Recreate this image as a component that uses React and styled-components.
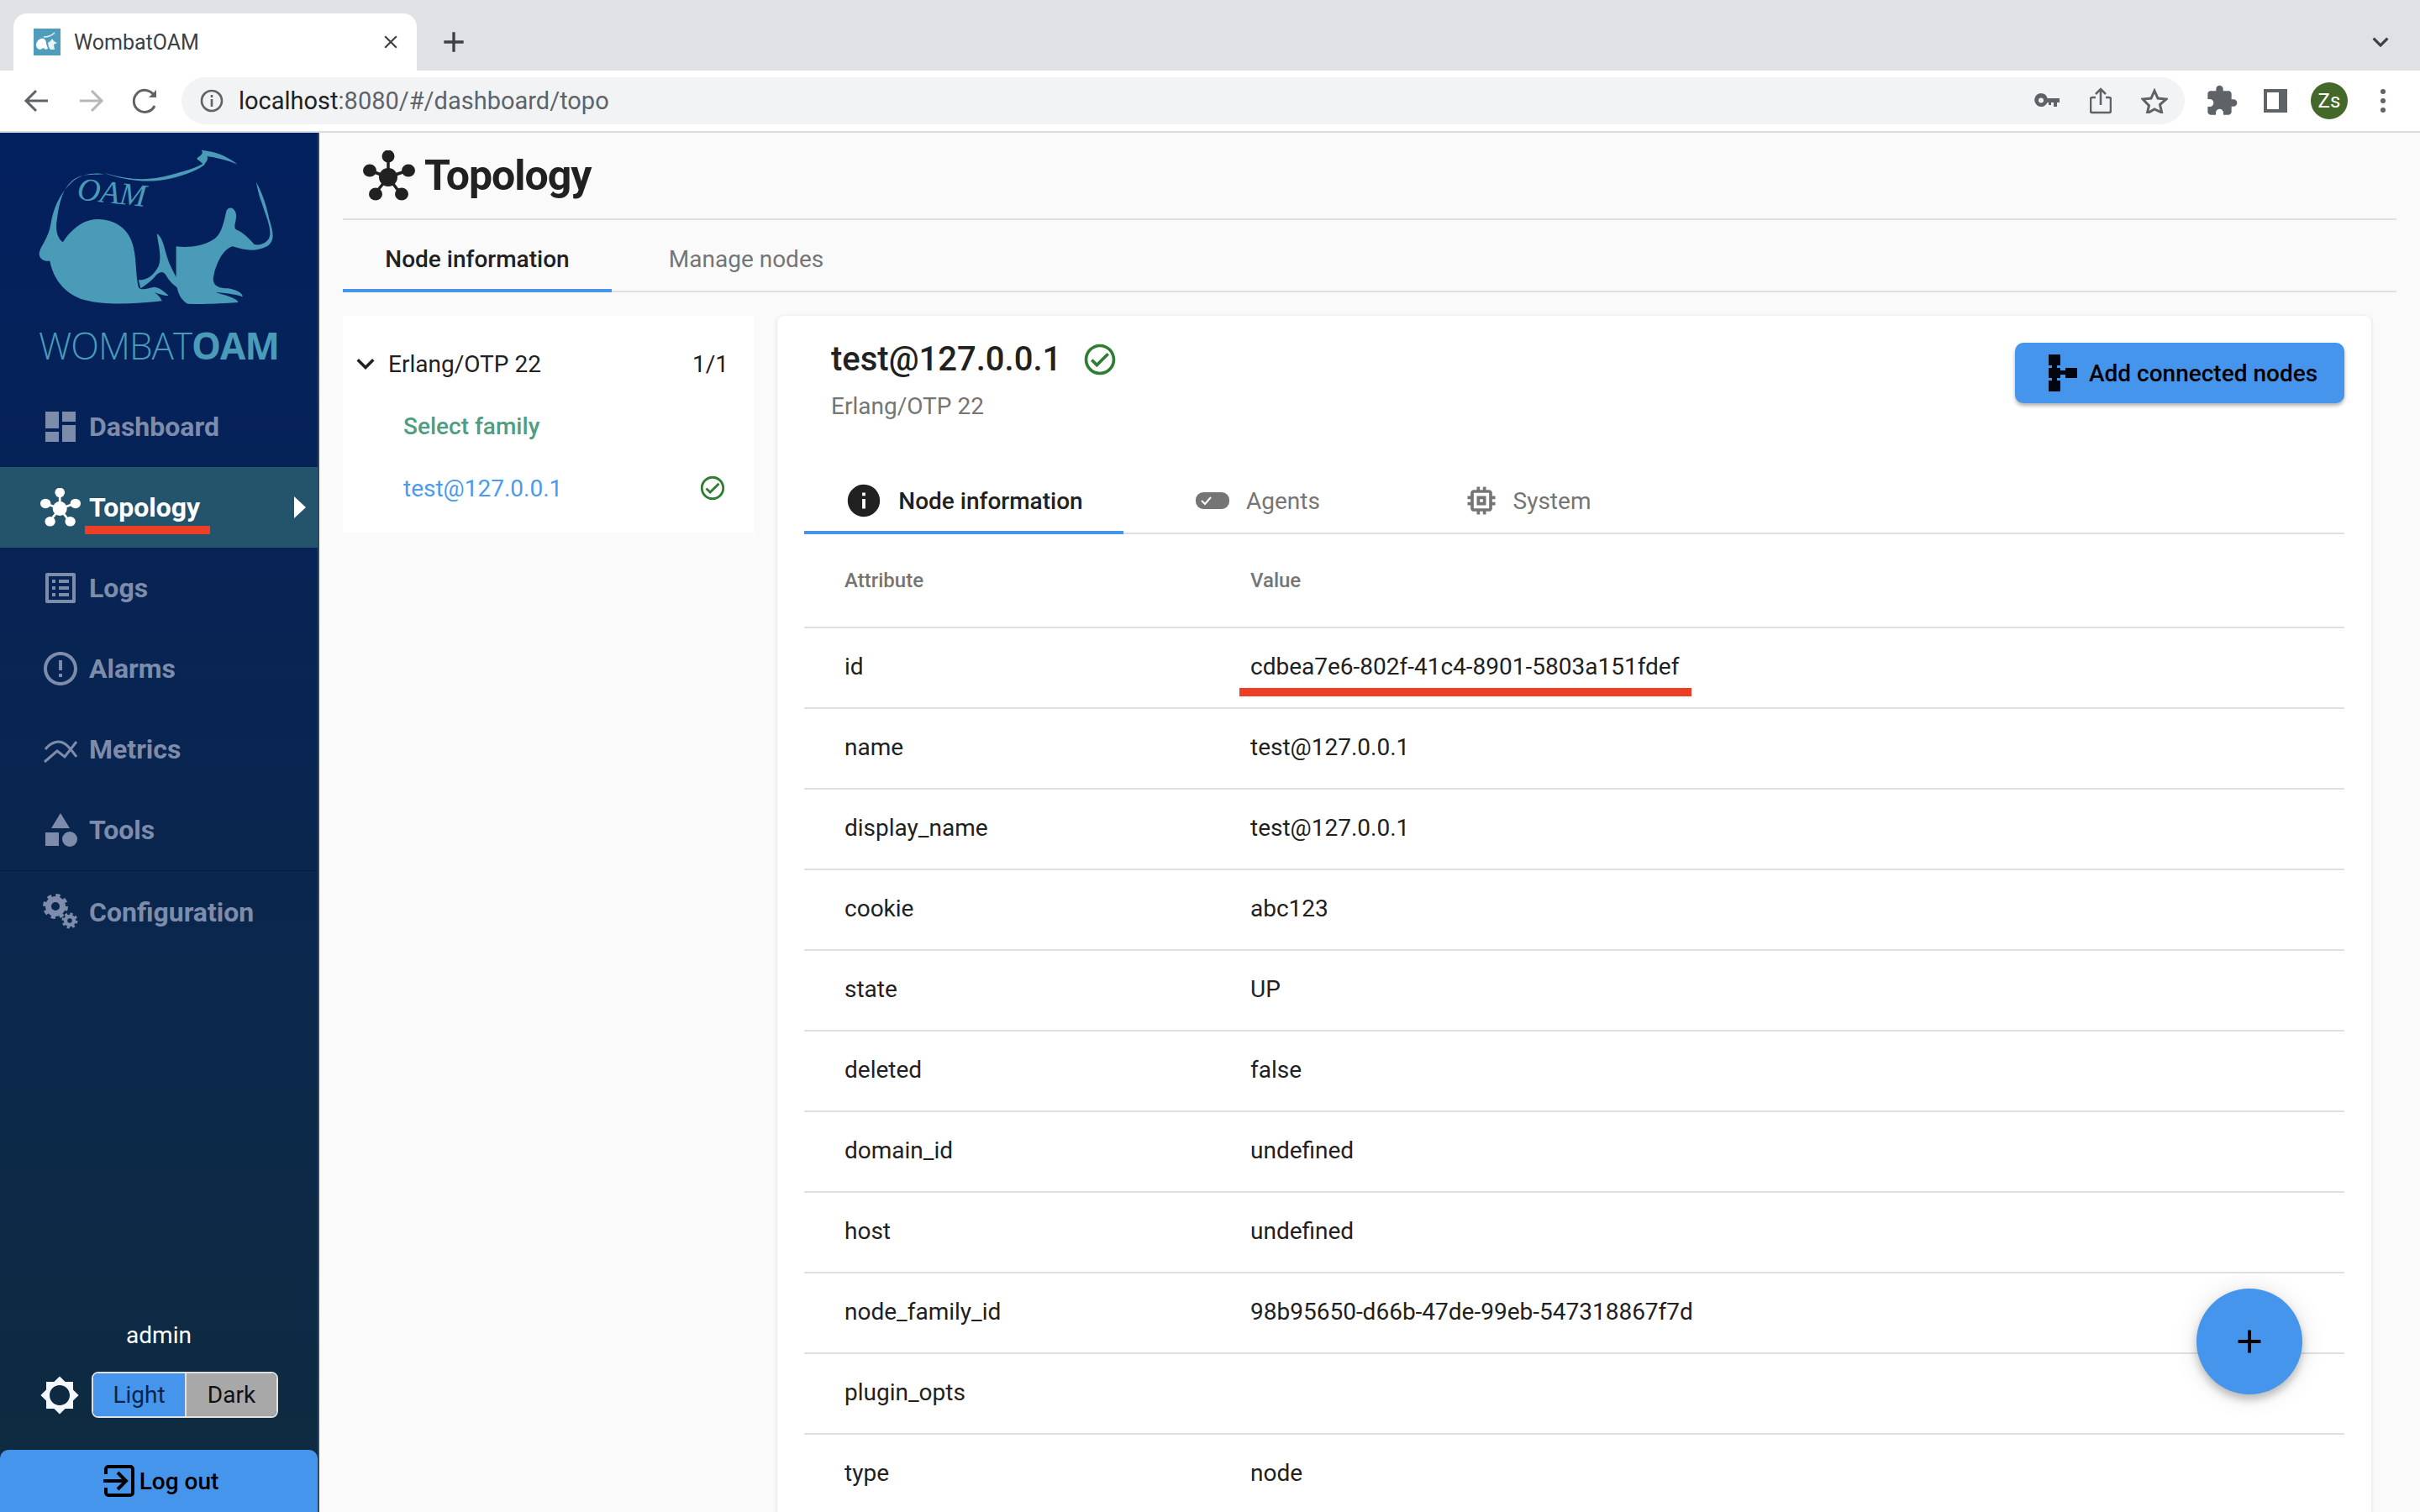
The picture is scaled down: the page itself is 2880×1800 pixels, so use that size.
import React from 'react';
import styled, { createGlobalStyle } from 'styled-components';
import {
  MdDashboard, MdOutlineListAlt, MdErrorOutline, MdCategory,
  MdBrightness5, MdOutlineCheckCircle, MdInfo, MdOutlineMemory, MdExtension, MdAdd, MdClose, MdExpandMore,
} from 'react-icons/md';

const BLUE = '#4595ec';
const FONT = 'Roboto, "Liberation Sans", sans-serif';

const GlobalStyle = createGlobalStyle`
  html, body { margin: 0; padding: 0; background: #fafafa; }
  body { font-family: ${FONT}; color: #212121; }
  * { box-sizing: border-box; }
`;

const Page = styled.div`
  width: 2880px;
  height: 1800px;
  overflow: hidden;
  display: flex;
  flex-direction: column;
  position: relative;
`;

/* browser chrome */
const TabStrip = styled.div`
  height: 84px;
  flex: none;
  background: #dfe1e5;
  display: flex;
  align-items: flex-end;
  padding-left: 16px;
  padding-right: 28px;
  color: #3c4043;
`;
const BrowserTab = styled.div`
  width: 480px;
  height: 68px;
  background: #fff;
  border-radius: 16px 16px 0 0;
  display: flex;
  align-items: center;
  padding: 0 18px 0 24px;
  font-size: 25px;
  color: #3c4043;
  svg.fav { margin-right: 16px; }
`;
const TabTitle = styled.span`
  flex: 1;
`;
const NewTab = styled.div`
  width: 44px;
  height: 68px;
  margin-left: 22px;
  display: flex;
  align-items: center;
  justify-content: center;
`;
const StripChevron = styled.div`
  margin-left: auto;
  height: 68px;
  display: flex;
  align-items: center;
`;
const Toolbar = styled.div`
  height: 74px;
  flex: none;
  background: #fff;
  border-bottom: 2px solid #dadce0;
  display: flex;
  align-items: center;
  padding-left: 24px;
`;
const NavGlyphs = styled.div`
  display: flex;
  gap: 24px;
  width: 192px;
`;
const UrlPill = styled.div`
  width: 2384px;
  height: 56px;
  border-radius: 28px;
  background: #f1f3f4;
  display: flex;
  align-items: center;
  padding: 0 4px 0 22px;
  margin-right: 12px;
`;
const UrlText = styled.div`
  margin-left: 18px;
  flex: 1;
  font-size: 29px;
  color: #5f6368;
  b { font-weight: 400; color: #202124; }
`;
const IconSlot = styled.div`
  width: 64px;
  height: 56px;
  flex: none;
  display: flex;
  align-items: center;
  justify-content: center;
`;
const Avatar = styled.div`
  width: 44px;
  height: 44px;
  border-radius: 50%;
  background: #43682a;
  color: #fff;
  font-size: 24px;
  display: flex;
  align-items: center;
  justify-content: center;
`;

/* app */
const Body = styled.div`
  flex: 1;
  display: flex;
  min-height: 0;
`;
const Sidebar = styled.aside`
  width: 380px;
  flex: none;
  display: flex;
  flex-direction: column;
  background: linear-gradient(180deg, #03205f 0%, #0f2b3f 100%);
  border-right: 2px solid #2f4a66;
`;
const Brand = styled.div`
  height: 302px;
  flex: none;
  display: flex;
  flex-direction: column;
  align-items: center;
  padding-top: 12px;
  color: #4a9bb8;
`;
const BrandName = styled.div`
  font-size: 44px;
  line-height: 48px;
  margin-top: 17px;
  font-family: "Open Sans", Roboto, sans-serif;
  letter-spacing: -1px;
  font-weight: 300;
  white-space: nowrap;
  b { font-weight: 700; }
`;
const NavItem = styled.div`
  height: 96px;
  display: flex;
  align-items: center;
  padding: ${p => (p.$divided ? '3px' : '0')} 14px 0 48px;
  font-size: 32px;
  font-weight: 700;
  gap: 10px;
  color: ${p => (p.$active ? '#fff' : '#7d8cab')};
  background: ${p => (p.$active ? '#24536c' : 'transparent')};
  border-top: ${p => (p.$divided ? '1px solid rgba(0,0,0,.18)' : 'none')};
  svg { flex: none; }
`;
const ActiveArrow = styled.div`
  margin-left: auto;
  width: 0;
  height: 0;
  border-top: 13px solid transparent;
  border-bottom: 13px solid transparent;
  border-left: 14px solid #fff;
`;
const RedMark = styled.div`
  position: absolute;
  height: 10px;
  background: #ee3e25;
  left: ${p => p.$left}px;
  top: ${p => p.$top}px;
  width: ${p => p.$width}px;
`;
const SideFoot = styled.div`
  margin-top: auto;
  display: flex;
  flex-direction: column;
`;
const UserName = styled.div`
  text-align: center;
  color: #fff;
  font-size: 28px;
  line-height: 34px;
  margin-bottom: 26px;
`;
const ThemeRow = styled.div`
  display: flex;
  align-items: center;
  padding-left: 47px;
  gap: 14px;
  margin-bottom: 38px;
  color: #f3f8fe;
`;
const ThemeToggle = styled.div`
  display: flex;
  width: 222px;
  height: 55px;
  border: 2px solid #e0e0e0;
  border-radius: 8px;
  overflow: hidden;
`;
const ThemeOption = styled.div`
  flex: ${p => (p.$light ? '0 0 111px' : '1')};
  background: ${p => (p.$light ? BLUE : '#a8a8a8')};
  border-right: ${p => (p.$light ? '2px solid #e0e0e0' : 'none')};
  font-size: 28px;
  display: flex;
  align-items: center;
  justify-content: center;
  color: ${p => (p.$light ? '#0a2547' : '#111')};
`;
const LogoutButton = styled.div`
  height: 74px;
  background: ${BLUE};
  border-radius: 10px 10px 0 0;
  display: flex;
  align-items: center;
  justify-content: center;
  gap: 6px;
  font-size: 28px;
  font-weight: 500;
  color: #000;
  padding-left: 4px;
`;

const Main = styled.main`
  flex: 1;
  min-width: 0;
  padding: 0 28px;
  background: #fafafa;
`;
const PageHeader = styled.div`
  height: 104px;
  border-bottom: 2px solid #e0e0e0;
  display: flex;
  align-items: center;
  padding-left: 24px;
  gap: 11px;
  font-size: 50px;
  font-weight: 700;
  letter-spacing: -1px;
  color: #212121;
`;
const TabRow = styled.div`
  display: flex;
  height: ${p => p.$height || 86}px;
  border-bottom: 2px solid #e0e0e0;
`;
const TabButton = styled.div`
  width: ${p => p.$width || 320}px;
  flex: none;
  display: flex;
  align-items: center;
  justify-content: center;
  gap: ${p => p.$gap || 20}px;
  font-size: 28px;
  font-weight: ${p => (p.$active ? 500 : 400)};
  color: ${p => (p.$active ? '#212121' : '#757575')};
  border-bottom: ${p => (p.$active ? `4px solid ${BLUE}` : 'none')};
  margin-bottom: -2px;
  padding-top: ${p => (p.$active ? '8px' : '4px')};
`;
const PageTab = styled(TabButton)`
  padding-top: ${p => (p.$active ? '10px' : '6px')};
`;
const Content = styled.div`
  display: flex;
  align-items: flex-start;
  gap: 28px;
  padding: 28px 30px 0 0;
`;
const TreeCard = styled.div`
  width: 489px;
  height: 258px;
  flex: none;
  background: #fff;
  padding-top: 20px;
`;
const TreeRow = styled.div`
  height: 74px;
  display: flex;
  align-items: center;
  padding: 0 ${p => (p.$head ? 30 : 32)}px 0 ${p => (p.$head ? 6 : 72)}px;
  font-size: 28px;
  color: ${p => p.$color || '#212121'};
  font-weight: ${p => (p.$medium ? 500 : 400)};
`;
const TreeLabel = styled.span`
  flex: 1;
  margin-left: ${p => (p.$head ? 6 : 0)}px;
`;
const DetailCard = styled.section`
  flex: 1;
  min-width: 0;
  height: 1500px;
  background: #fff;
  border-radius: 8px 8px 0 0;
  box-shadow: 0 1px 5px rgba(0,0,0,.12);
  padding: 0 32px;
`;
const DetailHeader = styled.div`
  height: 176px;
  display: flex;
  align-items: flex-start;
  justify-content: space-between;
  padding-left: 32px;
`;
const NodeTitle = styled.div`
  display: flex;
  align-items: center;
  gap: 24px;
  margin-top: 28px;
  font-size: 40px;
  line-height: 48px;
  font-weight: 500;
`;
const NodeSub = styled.div`
  margin-top: 15px;
  font-size: 28px;
  line-height: 34px;
  color: #757575;
`;
const PrimaryButton = styled.div`
  margin-top: 32px;
  width: 392px;
  height: 72px;
  background: ${BLUE};
  border-radius: 10px;
  box-shadow: 0 3px 4px rgba(0,0,0,.3);
  display: flex;
  align-items: center;
  padding-left: 40px;
  gap: 14px;
  font-size: 28px;
  font-weight: 500;
  color: #000;
`;
const TableRow = styled.div`
  display: grid;
  grid-template-columns: 531px 1fr;
  align-items: center;
  height: ${p => (p.$head ? 112 : 96)}px;
  padding-bottom: ${p => (p.$head ? 0 : 3)}px;
  border-bottom: 2px solid #e0e0e0;
  font-size: ${p => (p.$head ? 24 : 28)}px;
  font-weight: ${p => (p.$head ? 500 : 400)};
  color: ${p => (p.$head ? '#757575' : '#212121')};
`;
const AttrCell = styled.div`
  padding-left: 48px;
`;
const Fab = styled.div`
  position: absolute;
  left: 2614px;
  top: 1534px;
  width: 126px;
  height: 126px;
  border-radius: 50%;
  background: ${BLUE};
  box-shadow: 0 6px 10px rgba(0,0,0,.22), 0 2px 30px rgba(0,0,0,.12);
  display: flex;
  align-items: center;
  justify-content: center;
  color: #000;
`;

const Favicon = () => (
  <svg className="fav" width="32" height="32" viewBox="0 0 32 32">
    <rect width="32" height="32" fill="#4f9dbd" />
    <path d="M3 19c1-6 6-8 9-7 2 1 3 3 3 6l2 6-3 1-2-2-4 2c-3 0-5-3-5-6z" fill="#fff" />
    <path d="M17 17c2-1 4-3 5-5 1 2 3 4 6 5l-4 2 1 6h-5l-2-3z" fill="#e8f2f6" />
    <path d="M12 10c4 0 9-1 13-5" stroke="#e8f2f6" strokeWidth="1.4" fill="none" />
  </svg>
);

const TopologyIcon = ({ width, height, color }) => (
  <svg width={width} height={height} viewBox="0 0 62 60" preserveAspectRatio="none" fill={color} stroke={color}>
    <path d="M30 32L30 5M30 32L8 24M30 32L53 24M30 32L14 52M30 32L45 52" strokeWidth="3.5" />
    <g stroke="none">
      <ellipse cx="30" cy="32" rx="11" ry="11" />
      <ellipse cx="30" cy="7" rx="7.5" ry="7.5" />
      <ellipse cx="8" cy="24" rx="8" ry="7.5" />
      <ellipse cx="54" cy="24" rx="8" ry="7.5" />
      <ellipse cx="15" cy="52" rx="8" ry="7.5" />
      <ellipse cx="46" cy="52" rx="8" ry="7.5" />
    </g>
  </svg>
);

const MetricsIcon = ({ color }) => (
  <svg width="48" height="48" viewBox="0 0 48 48" fill="none" stroke={color} strokeWidth="3">
    <path d="M6 24C12 16 22 12 30 18C34 21 38 26 43 33" />
    <path d="M5 39L20 26L29 33L43 15" />
  </svg>
);

const GearsIcon = ({ color }) => (
  <svg width="48" height="48" viewBox="0 0 48 48" fill="none" stroke={color}>
    <circle cx="18" cy="17" r="8.5" strokeWidth="7" />
    <circle cx="18" cy="17" r="13" strokeWidth="4" strokeDasharray="5.2 5" />
    <circle cx="35" cy="34" r="5" strokeWidth="4.5" />
    <circle cx="35" cy="34" r="8" strokeWidth="3" strokeDasharray="3.2 3.1" />
  </svg>
);

const WombatLogo = () => (
  <svg width="300" height="200" viewBox="78 510 589 600" preserveAspectRatio="none" fill="#4a9bb8">
    <path d="M245 622C225 615 190 620 170 650C140 690 125 750 120 800C115 850 95 880 93 905C93 925 105 935 118 932C125 990 150 1050 200 1072C250 1092 320 1085 380 1075C376 1062 372 1055 362 1045C375 1050 385 1058 395 1055C385 1040 375 1028 362 1025C345 1030 330 1040 325 1025C315 960 325 880 295 825C270 780 220 770 190 800C165 825 155 850 148 865C135 850 130 820 135 780C140 720 150 660 180 635C200 620 225 625 245 622Z" />
    <path d="M245 618C300 640 340 650 400 625C430 612 460 600 475 585C470 575 460 570 462 565C470 555 478 550 472 536C500 540 530 555 556 587C530 570 505 562 485 558C490 570 482 578 478 590C455 615 420 632 385 642C335 655 285 640 245 618Z" />
    <path d="M413 880C440 885 480 880 505 850C520 830 525 790 530 755C535 735 550 740 553 765C555 790 545 810 553 820C570 830 585 855 595 872C610 880 630 865 632 840C635 810 620 760 612 720C605 690 602 665 600 650C615 690 625 740 630 780C640 830 645 860 625 880C600 900 575 895 545 880C520 890 505 950 500 990C498 1020 510 1030 535 1030C555 1035 570 1050 568 1060C550 1050 520 1045 505 1045C530 1055 555 1065 558 1080C510 1085 470 1088 440 1085C425 1075 413 1040 413 1000Z" />
    <path d="M368 835C385 850 385 900 400 950C415 1000 430 1030 445 1052C420 1035 402 1015 392 990C385 970 378 965 365 985C355 1005 340 1020 330 1030L325 1000C345 1000 360 985 372 950C380 920 372 880 368 835Z" />
    <text transform="translate(180 712) scale(1.96 3) rotate(6)" fontFamily="Liberation Serif, serif" fontStyle="italic" fontSize="38">OAM</text>
  </svg>
);

const ButtonGlyph = () => (
  <svg width="34" height="44" viewBox="0 0 34 44" fill="#00060f">
    <rect width="14" height="13" />
    <rect y="16" width="14" height="12" />
    <rect y="31" width="14" height="13" />
    <rect x="4" y="10" width="6" height="24" />
    <rect x="14" y="19" width="8" height="5" />
    <rect x="20" y="16" width="14" height="12" />
  </svg>
);

const LogoutGlyph = () => (
  <svg width="38" height="38" viewBox="0 0 38 38" fill="none" stroke="#000" strokeWidth="4">
    <path d="M4 11V5a3 3 0 0 1 3-3h26a3 3 0 0 1 3 3v28a3 3 0 0 1-3 3H7a3 3 0 0 1-3-3v-6" />
    <path d="M1 19h27M18 9l10 10-10 10" />
  </svg>
);

const AgentsGlyph = () => (
  <svg width="40" height="20" viewBox="0 0 40 20">
    <rect width="40" height="20" rx="9" fill="#757575" />
    <path d="M7 10l4 4 7-8" fill="none" stroke="#fff" strokeWidth="2" />
  </svg>
);

const Arrow = ({ right, color }) => (
  <svg width="40" height="40" viewBox="0 0 40 40" fill="none" stroke={color} strokeWidth="3">
    {right
      ? <path d="M7 20h26M21 8l12 12-12 12" />
      : <path d="M33 20H7M19 8L7 20l12 12" />}
  </svg>
);
const Reload = () => (
  <svg width="40" height="40" viewBox="0 0 40 40" fill="none" stroke="#5f6368" strokeWidth="3">
    <path d="M32 26a13 13 0 1 1-1-13" />
    <path d="M34 7v9h-9z" fill="#5f6368" stroke="none" />
  </svg>
);
const InfoOutline = () => (
  <svg width="28" height="28" viewBox="0 0 28 28" fill="none" stroke="#5f6368" strokeWidth="2.6">
    <circle cx="14" cy="14" r="12" />
    <path d="M14 12v9M14 7v3" />
  </svg>
);
const KeyGlyph = () => (
  <svg width="30" height="20" viewBox="0 0 30 20" fill="#5f6368">
    <path fillRule="evenodd" d="M8 1a8 8 0 0 1 7.6 6H30v5h-3v5h-4v-5h-3v3h-3v-3h-1.4A8 8 0 1 1 8 1zm0 5.500a3 3 0 1 0 0 6 3 3 0 0 0 0-6z" />
  </svg>
);
const ShareGlyph = () => (
  <svg width="26" height="32" viewBox="0 0 26 32" fill="none" stroke="#5f6368" strokeWidth="2.6">
    <path d="M7 12H3a2 2 0 0 0-2 2v14a2 2 0 0 0 2 2h20a2 2 0 0 0 2-2V14a2 2 0 0 0-2-2h-4" />
    <path d="M13 21V2M7 8l6-6 6 6" />
  </svg>
);
const StarGlyph = () => (
  <svg width="32" height="30" viewBox="0 0 32 30" fill="none" stroke="#5f6368" strokeWidth="3">
    <path d="M16 3l4 9 10 1-7.500 6.600 2.200 9.400L16 25l-8.700 5 2.200-9.400L2 13l10-1z" />
  </svg>
);
const PanelGlyph = () => (
  <svg width="28" height="28" viewBox="0 0 28 28">
    <rect width="28" height="28" fill="#5f6368" />
    <rect x="4" y="4" width="14" height="20" fill="#fff" />
  </svg>
);
const KebabGlyph = () => (
  <svg width="12" height="30" viewBox="0 0 12 30" fill="#5f6368">
    <circle cx="6" cy="4" r="3" /><circle cx="6" cy="15" r="3" /><circle cx="6" cy="26" r="3" />
  </svg>
);

const navItems = [
  { label: 'Dashboard', icon: <MdDashboard size={48} /> },
  { label: 'Topology', active: true },
  { label: 'Logs', icon: <MdOutlineListAlt size={48} /> },
  { label: 'Alarms', icon: <MdErrorOutline size={48} /> },
  { label: 'Metrics', icon: <MetricsIcon color="#7d8cab" /> },
  { label: 'Tools', icon: <MdCategory size={48} /> },
  { label: 'Configuration', icon: <GearsIcon color="#7d8cab" />, divided: true },
];

const rows = [
  ['id', 'cdbea7e6-802f-41c4-8901-5803a151fdef'],
  ['name', 'test@127.0.0.1'],
  ['display_name', 'test@127.0.0.1'],
  ['cookie', 'abc123'],
  ['state', 'UP'],
  ['deleted', 'false'],
  ['domain_id', 'undefined'],
  ['host', 'undefined'],
  ['node_family_id', '98b95650-d66b-47de-99eb-547318867f7d'],
  ['plugin_opts', ''],
  ['type', 'node'],
];

export default function App() {
  return (
    <Page>
      <GlobalStyle />
      <TabStrip>
        <BrowserTab>
          <Favicon />
          <TabTitle>WombatOAM</TabTitle>
          <MdClose size={26} color="#3c4043" />
        </BrowserTab>
        <NewTab><MdAdd size={40} color="#3c4043" /></NewTab>
        <StripChevron><MdExpandMore size={38} color="#3c4043" /></StripChevron>
      </TabStrip>
      <Toolbar>
        <NavGlyphs>
          <Arrow color="#5f6368" />
          <Arrow right color="#b5b7ba" />
          <Reload />
        </NavGlyphs>
        <UrlPill>
          <InfoOutline />
          <UrlText><b>localhost</b>:8080/#/dashboard/topo</UrlText>
          <IconSlot><KeyGlyph /></IconSlot>
          <IconSlot><ShareGlyph /></IconSlot>
          <IconSlot><StarGlyph /></IconSlot>
        </UrlPill>
        <IconSlot><MdExtension size={40} color="#5f6368" /></IconSlot>
        <IconSlot><PanelGlyph /></IconSlot>
        <IconSlot><Avatar>Zs</Avatar></IconSlot>
        <IconSlot><KebabGlyph /></IconSlot>
      </Toolbar>
      <Body>
        <Sidebar>
          <Brand>
            <WombatLogo />
            <BrandName>WOMBAT<b>OAM</b></BrandName>
          </Brand>
          {navItems.map(item => (
            <NavItem key={item.label} $active={item.active} $divided={item.divided}>
              {item.active ? <TopologyIcon width={48} height={46} color="#fff" /> : item.icon}
              {item.label}
              {item.active && <ActiveArrow />}
            </NavItem>
          ))}
          <SideFoot>
            <UserName>admin</UserName>
            <ThemeRow>
              <MdBrightness5 size={48} />
              <ThemeToggle>
                <ThemeOption $light>Light</ThemeOption>
                <ThemeOption>Dark</ThemeOption>
              </ThemeToggle>
            </ThemeRow>
            <LogoutButton><LogoutGlyph />Log out</LogoutButton>
          </SideFoot>
        </Sidebar>
        <Main>
          <PageHeader>
            <TopologyIcon width={62} height={60} color="#212121" />
            Topology
          </PageHeader>
          <TabRow>
            <PageTab $active>Node information</PageTab>
            <PageTab>Manage nodes</PageTab>
          </TabRow>
          <Content>
            <TreeCard>
              <TreeRow $head>
                <MdExpandMore size={42} color="#212121" />
                <TreeLabel $head>Erlang/OTP 22</TreeLabel>
                1/1
              </TreeRow>
              <TreeRow $color="#4f9d82" $medium>Select family</TreeRow>
              <TreeRow $color="#4a9bee">
                <TreeLabel>test@127.0.0.1</TreeLabel>
                <MdOutlineCheckCircle size={34} color="#2e7d32" />
              </TreeRow>
            </TreeCard>
            <DetailCard>
              <DetailHeader>
                <div>
                  <NodeTitle>test@127.0.0.1<MdOutlineCheckCircle size={44} color="#2e7d32" /></NodeTitle>
                  <NodeSub>Erlang/OTP 22</NodeSub>
                </div>
                <PrimaryButton><ButtonGlyph />Add connected nodes</PrimaryButton>
              </DetailHeader>
              <TabRow $height={84}>
                <TabButton $active $width={380} $gap={18}><MdInfo size={46} color="#212121" />Node information</TabButton>
                <TabButton><AgentsGlyph />Agents</TabButton>
                <TabButton $gap={16}><MdOutlineMemory size={44} />System</TabButton>
              </TabRow>
              <TableRow $head>
                <AttrCell>Attribute</AttrCell>
                <div>Value</div>
              </TableRow>
              {rows.map(([attr, value]) => (
                <TableRow key={attr}>
                  <AttrCell>{attr}</AttrCell>
                  <div>{value}</div>
                </TableRow>
              ))}
            </DetailCard>
          </Content>
        </Main>
      </Body>
      <RedMark $left={101} $top={626} $width={149} />
      <RedMark $left={1475} $top={819} $width={538} />
      <Fab><MdAdd size={46} /></Fab>
    </Page>
  );
}
